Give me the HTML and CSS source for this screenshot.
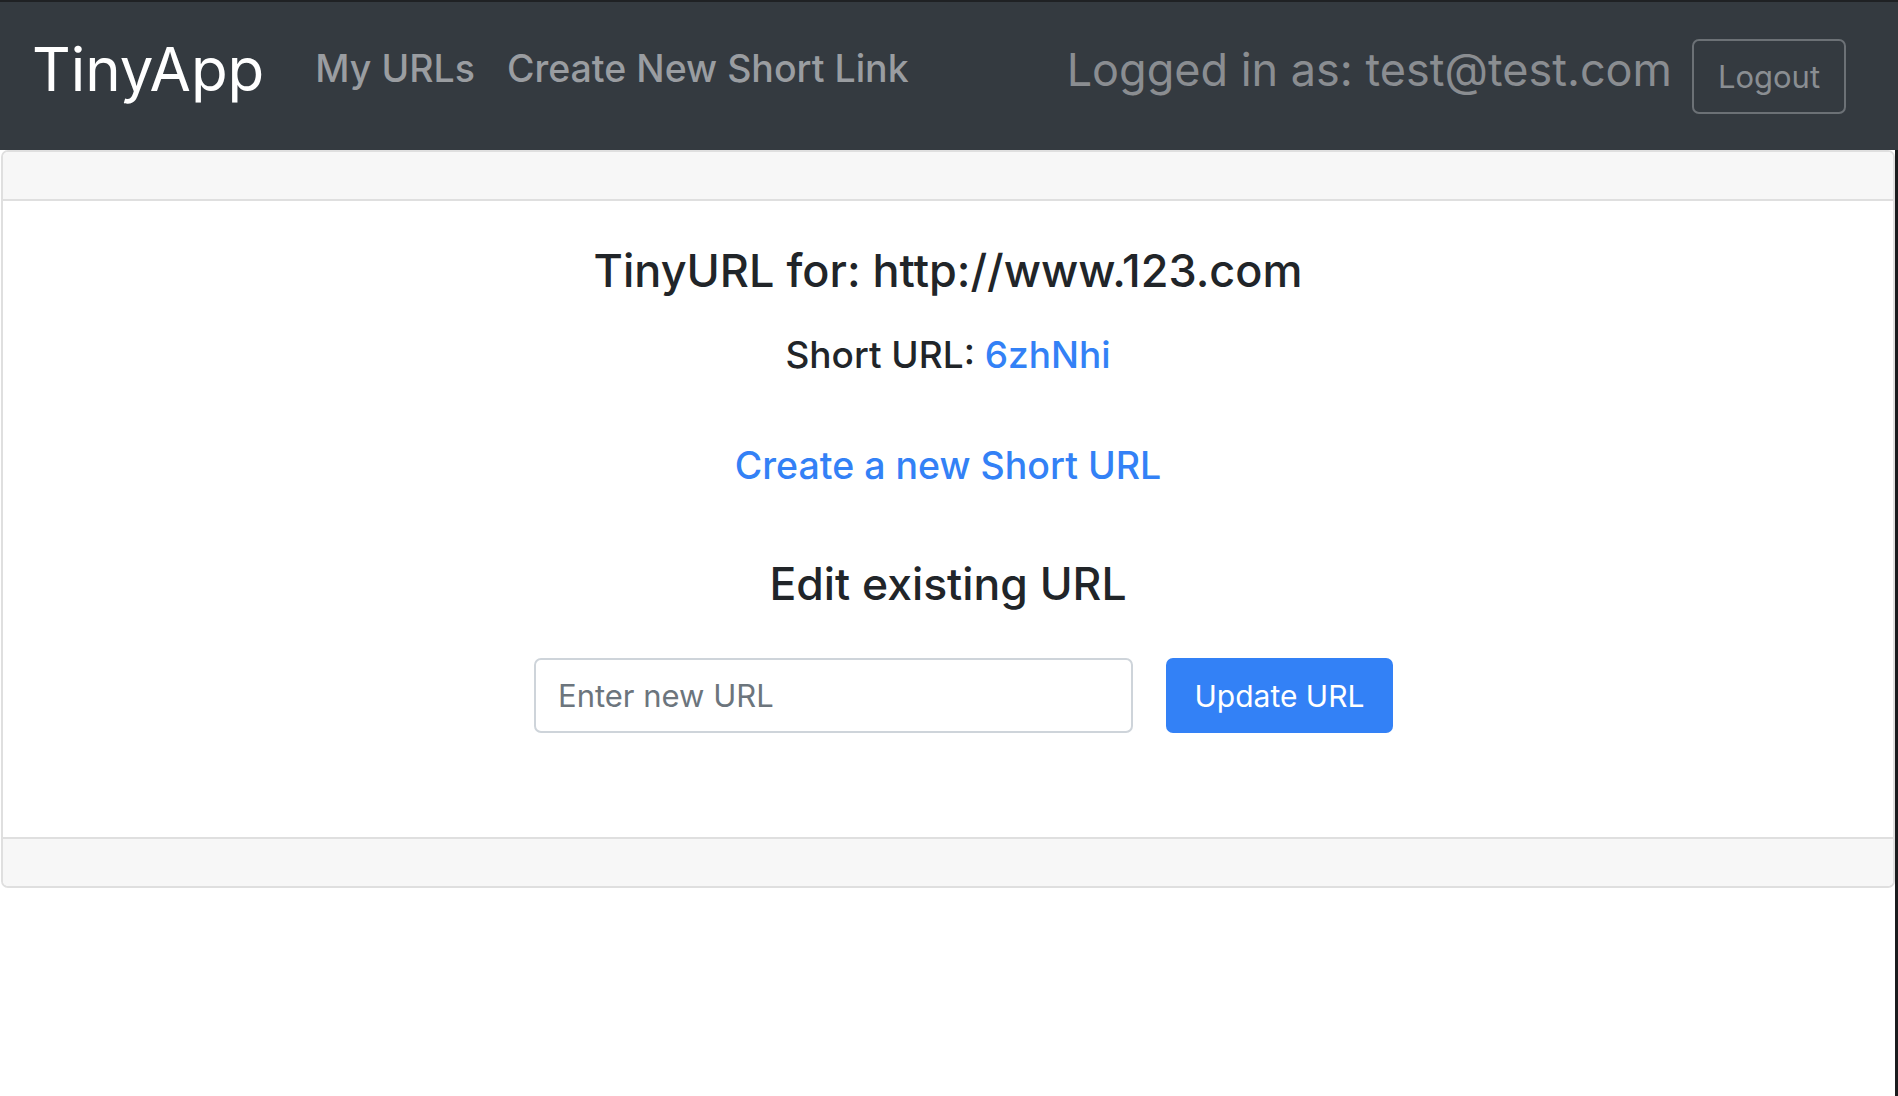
FILE: index.html
```html
<!DOCTYPE html>
<html lang="en">
<head>
<meta charset="utf-8">
<title>TinyApp</title>
<link rel="stylesheet" href="styles.css">
</head>
<body>
<nav class="navbar">
  <a class="brand" href="#">TinyApp</a>
  <div class="nav-links">
    <a class="nav-link" href="#">My URLs</a>
    <a class="nav-link" href="#">Create New Short Link</a>
  </div>
  <div class="nav-right">
    <span class="logged">Logged in as: test@test.com</span>
    <button class="btn-logout" type="button">Logout</button>
  </div>
</nav>
<div class="page">
  <div class="card">
    <div class="card-header"></div>
    <div class="card-body">
      <h3 class="title">TinyURL for: http://www.123.com</h3>
      <h5 class="short">Short URL: <a class="link" href="#">6zhNhi</a></h5>
      <a class="create-link" href="#">Create a new Short URL</a>
      <h4 class="edit-title">Edit existing URL</h4>
      <form class="edit-form">
        <input class="url-input" type="text" placeholder="Enter new URL">
        <button class="btn-primary" type="button">Update URL</button>
      </form>
    </div>
    <div class="card-footer"></div>
  </div>
</div>
</body>
</html>
```

FILE: styles.css
```css
* { box-sizing: border-box; }

body {
  margin: 0;
  font-family: Inter, "Noto Sans", "Liberation Sans", sans-serif;
  background: #ffffff;
  color: #212529;
}

a { text-decoration: none; }

.navbar {
  display: flex;
  align-items: center;
  height: 150px;
  border-top: 2px solid #1f2124;
  background: #343a40;
  padding: 0 52px 0 32px;
}

.brand {
  font-size: 60px;
  line-height: 1;
  color: #ffffff;
  margin-bottom: 14px;
}

.nav-links {
  display: flex;
  gap: 32px;
  margin-left: 51px;
  margin-bottom: 14px;
}

.nav-link {
  font-size: 37.5px;
  line-height: 1;
  font-weight: 500;
  color: #9a9da1;
}

.nav-right {
  margin-left: auto;
  display: flex;
  align-items: center;
  gap: 20px;
}

.logged {
  font-size: 45px;
  line-height: 1;
  color: #8a8d91;
  margin-bottom: 14px;
}

.btn-logout {
  width: 154px;
  height: 75px;
  background: transparent;
  border: 2px solid #6c7176;
  border-radius: 7px;
  color: #8a8e92;
  font-family: inherit;
  font-size: 31px;
  padding: 0;
}

.page {
  display: flex;
  border-right: 3px solid #1b1c1e;
  min-height: calc(100vh - 150px);
  align-items: flex-start;
}

.card {
  flex: 1;
  margin-left: 1px;
  border: 2px solid #dfdfdf;
  border-radius: 7px;
  overflow: hidden;
}

.card-header {
  height: 49px;
  background: #f7f7f7;
  border-bottom: 2px solid #dfdfdf;
}

.card-footer {
  height: 49px;
  background: #f7f7f7;
  border-top: 2px solid #dfdfdf;
}

.card-body {
  display: flex;
  flex-direction: column;
  align-items: center;
  padding: 47px 0 0;
  height: 636px;
}

.title {
  margin: 0;
  font-size: 45px;
  line-height: 1;
  font-weight: 500;
}

.short {
  margin: 43px 0 0;
  font-size: 37px;
  line-height: 1;
  font-weight: 500;
}

.link { color: #3381f6; }

.create-link {
  margin-top: 74px;
  font-size: 37.5px;
  line-height: 1;
  font-weight: 500;
  color: #3381f6;
}

.edit-title {
  margin: 77px 0 0;
  font-size: 44.5px;
  line-height: 1;
  font-weight: 500;
}

.edit-form {
  margin-top: 52px;
  align-self: stretch;
  display: flex;
  justify-content: center;
  gap: 33px;
  padding-left: 31px;
}

.url-input {
  width: 599px;
  height: 75px;
  border: 2px solid #ced4da;
  border-radius: 7px;
  padding: 0 22px;
  font-family: inherit;
  font-size: 31px;
  color: #495057;
}

.url-input::placeholder { color: #6c757d; }

.btn-primary {
  width: 227px;
  height: 75px;
  border: none;
  border-radius: 7px;
  background: #3381f6;
  color: #ffffff;
  font-family: inherit;
  font-size: 30px;
  padding: 0;
}
```
